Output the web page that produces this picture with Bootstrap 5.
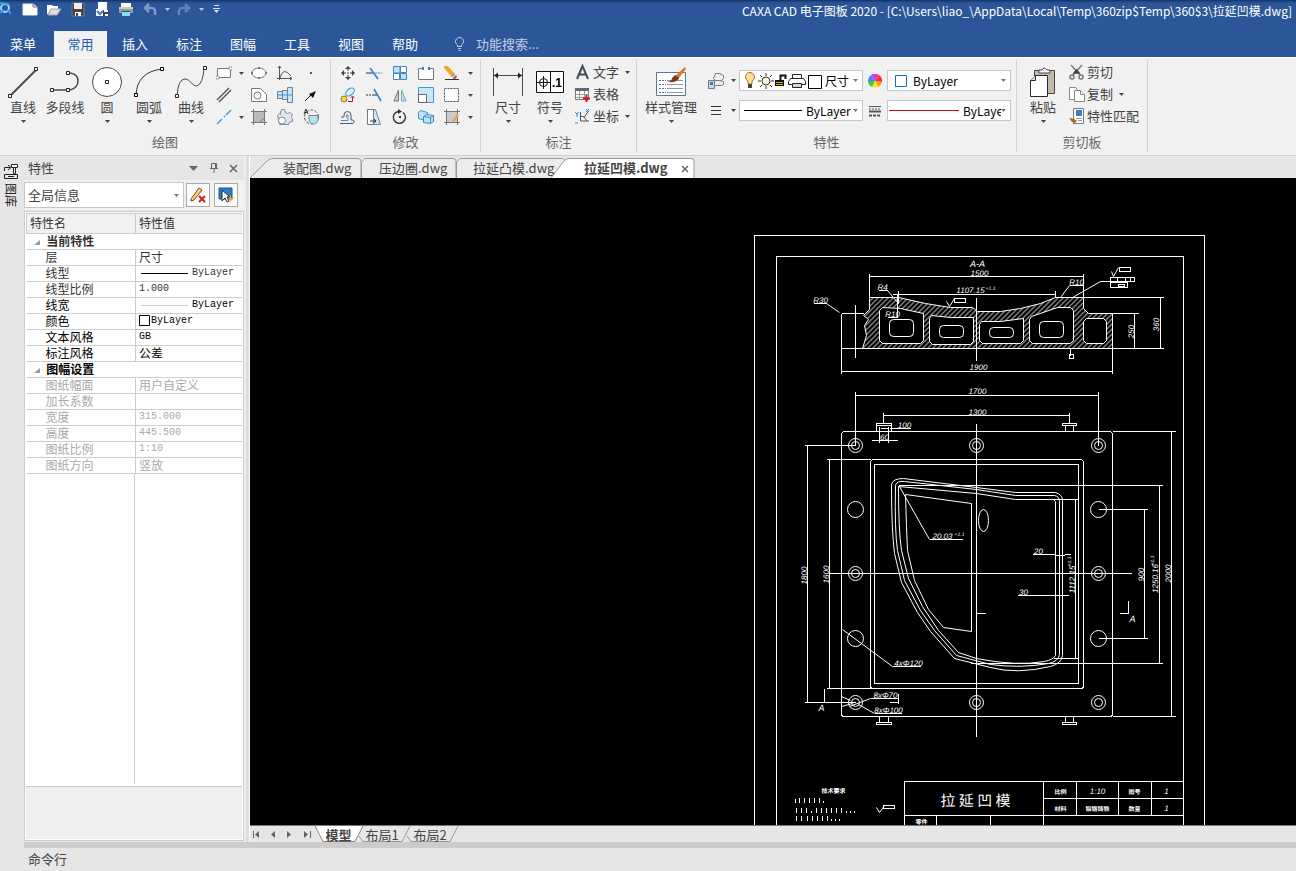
<!DOCTYPE html>
<html lang="zh-CN">
<head>
<meta charset="utf-8">
<meta name="viewport" content="width=device-width, initial-scale=1">
<title>CAXA CAD 电子图板 2020</title>
<link rel="stylesheet" href="https://cdn.jsdelivr.net/npm/bootstrap@5.3.0/dist/css/bootstrap.min.css">
<script src="https://cdn.jsdelivr.net/npm/bootstrap@5.3.0/dist/js/bootstrap.bundle.min.js"></script>
<style>
:root{--blue:#2b579a;--line:#d0d0d0}
body{font-family:"Noto Sans CJK SC",sans-serif;font-size:13px;line-height:18px;color:#444;background:#e6e6e6;overflow:hidden}
svg{display:block;flex:none}
button{background:none;border:0;padding:0;color:inherit;font:inherit}
.titlebar{background:var(--blue);color:#fff;height:31px;box-shadow:inset 0 3px 3px -2px #0d2a55}
.quick{height:18px}
.quick button{width:24px;display:flex;justify-content:center}
.quick .slim{width:10px}
.apptitle{font-size:12px;line-height:22px;white-space:nowrap}
.menubar{background:var(--blue);height:26px;color:#fff}
.menubar button{width:54px;height:26px;line-height:24px}
.menubar .first{width:46px;margin-right:8px}
.menubar .chosen{background:#f1f1f1;color:#1a5fb4;width:53px;margin-right:1px}
.menubar input{background:none;border:0;color:#d5deee;width:120px;padding:0;font-size:13px;line-height:18px}
.menubar input::placeholder{color:#c3cfe4;opacity:1}
.ribbon{background:#f1f1f1;height:99px;border-bottom:1px solid var(--line);box-shadow:inset 0 1px #fff}
.rgroup{position:relative;border-right:1px solid var(--line);margin:3px 0;flex:none}
.rbody{height:73px;padding-top:2px}
.rtitle{text-align:center;color:#666;line-height:18px}
.big{width:42px;display:flex;flex-direction:column;align-items:center;padding-top:2px;height:70px;white-space:nowrap}
.big .caret{margin-top:4px}
.mini{display:grid;grid-auto-rows:22px}
.mini button{display:flex;align-items:center;justify-content:center}
.tool{display:flex;align-items:center;gap:2px;height:22px;white-space:nowrap;line-height:20px;padding-bottom:2px}
.combo{display:flex;align-items:center;background:#fff;border:1px solid #c6c6c6;height:21px;width:124px;color:#000;padding-left:3px;overflow:hidden}
.combo select{appearance:none;border:0;background:none;padding:0;color:inherit;font-size:12px;line-height:18px;flex:1;min-width:0;overflow:hidden}
.combo .caret{margin:0 4px 0 0}
.side{width:24px;padding:7px 0 0 3px}
.side button{writing-mode:vertical-rl;text-orientation:sideways;font-size:12px;line-height:16px;display:flex;align-items:center;color:#222}
.side svg{writing-mode:horizontal-tb}
.panel{width:220px}
.panelhead{height:24px;padding-left:4px}
.picker{background:#f1f1f1;height:30px}
.picker .combo{width:160px;height:26px;color:#444;padding-left:3px}
.picker .combo select{font-size:13px}
.sq{width:24px;height:24px;border:1px solid #aaa;background:#fcfcfc;display:grid;place-items:center}
.sheet{border:1px solid #ccc;background:#fff;padding:1px;font-size:12px;margin:1px 0}
.props{width:100%;border-collapse:collapse;table-layout:fixed;line-height:14px;color:#333}
.props td,.props th{padding:0 0 1px 3px;font-weight:400;border-bottom:1px solid #ccc;height:16px;white-space:nowrap}
.props th{background:#f1f1f1;border:1px solid #ccc;height:20px}
.props th:last-child{border-right:0}
.props tbody th{border:0;border-bottom:1px solid #ccc;height:16px;background:#fff;font-weight:700;padding-left:7px}
.props tbody td:first-child{padding-left:19px;border-right:1px solid #ccc}
.props .dark,.props .dark th{color:#000}
.props .dim{color:#aaa}
.props .latin{font-family:"Liberation Mono",monospace;font-size:10px}
.props .sample{display:flex;align-items:center;height:14px}
.rest{background:linear-gradient(#ccc,#ccc) 108px 0/1px 100% no-repeat}
.note{background:#efefef;border-top:1px solid #ccc;height:53px;margin-top:2px}
.gutter{width:6px;border-left:2px solid #efefef;border-right:1px solid #fff;background:#ddd}
.doctabs{height:22px;padding-top:2px}
.doctabs button{position:relative;height:20px;line-height:20px;text-align:left;white-space:nowrap;z-index:1}
.doctabs svg.shape,.sheets svg.shape{position:absolute;left:0;top:0;z-index:-1;overflow:visible}
.doctabs .open{font-weight:700;z-index:2}
.board{background:#000;min-height:0}
.board text{fill:#fff;stroke:none;font:italic 8px "Liberation Sans Narrow","Liberation Sans",sans-serif;text-rendering:geometricPrecision}
.board .hz{font:6px "Noto Sans CJK SC",sans-serif;font-weight:700}
.board .name{font:15px "Noto Sans CJK SC",sans-serif}
.board .tol{font-size:5px}
.sheets{height:17px;border-top:1px solid #777}
.sheets button{position:relative;height:16px;line-height:13px;z-index:1;text-align:center}
.sheets .nav4{width:16px;display:flex;justify-content:center;align-items:center}
.cmd{height:29px;border-top:6px solid #ccc;margin-left:24px;padding:2px 4px}
</style>
</head>
<body class="d-flex flex-column vh-100">
<svg width="0" height="0" class="position-absolute" aria-hidden="true">
 <symbol id="dd" viewBox="0 0 5 3"><path d="M0 0h5L2.500 3z" fill="currentColor"/></symbol>
</svg>

<header>
 <div class="titlebar d-flex justify-content-between align-items-start">
  <div class="quick d-flex align-items-center">
   <button style="width:18px" aria-label="CAXA"><svg width="18" height="18" viewBox="0 0 18 18" fill="none"><circle cx="5" cy="8" r="4" stroke="#9cd1ff" stroke-width="2"/><path d="M0 3l9 1M8 10l3 4M0 13l4-3" stroke="#2fa0f5" stroke-width="2"/></svg></button>
   <button aria-label="新建"><svg width="16" height="16" viewBox="0 0 16 16"><path d="M1 3h10l4 3v8H1z" fill="#fff" stroke="#eee"/><path d="M11 3v3h4" fill="#ddd" stroke="#777"/></svg></button>
   <button aria-label="打开"><svg width="16" height="16" viewBox="0 0 16 16"><path d="M1 4h5l1 1h5v3H5l-3 5H1z" fill="#fff"/><path d="M5 8h10l-4 6H2z" fill="#ddd" stroke="#aaa"/></svg></button>
   <button aria-label="保存"><svg width="16" height="16" viewBox="0 0 16 16"><path d="M2 2h12v13H2z" fill="#444" stroke="#777"/><path d="M4 2h8v6H4z" fill="#eee"/><path d="M5 11h6v4H5z" fill="#fff"/><path d="M6 12h2v3H6z" fill="#444"/></svg></button>
   <button aria-label="另存为"><svg width="16" height="16" viewBox="0 0 16 16"><path d="M4 1h9v8H4z" fill="#fff"/><path d="M2 8h7v7H2z" fill="#fff"/><path d="M3 10l3 3 3-3" stroke="#3a7fd0" fill="none" stroke-width="2"/><path d="M9 9h6v6H9z" fill="#444"/><path d="M10 9h4v2h-4zM11 13h3v2h-3z" fill="#fff"/></svg></button>
   <button aria-label="打印"><svg width="16" height="16" viewBox="0 0 16 16"><path d="M3 2h10v4H3z" fill="#fff"/><path d="M1 6h14v6H1z" fill="#999"/><path d="M1 6h14v2H1z" fill="#ccc"/><path d="M4 10h8v5H4z" fill="#7fe0f5"/><path d="M4 10h8v1H4z" fill="#444"/></svg></button>
   <button aria-label="撤销"><svg width="16" height="16" viewBox="0 0 16 16" fill="none" stroke="#7e9bc8" stroke-width="2.500"><path d="M3 7h7q4 0 3 7"/><path d="M7 3L3 7l4 4"/></svg></button>
   <button class="slim" aria-label="撤销列表"><svg width="5" height="3" color="#b8c6df"><use href="#dd"/></svg></button>
   <button aria-label="重做"><svg width="16" height="16" viewBox="0 0 16 16" fill="none" stroke="#5f83bb" stroke-width="2.500"><path d="M13 7H6q-4 0-3 7"/><path d="M9 3l4 4-4 4"/></svg></button>
   <button class="slim" aria-label="重做列表"><svg width="5" height="3" color="#b8c6df"><use href="#dd"/></svg></button>
   <button style="width:20px" aria-label="自定义"><svg width="7" height="8" viewBox="0 0 7 8"><path d="M1 0h5v1H1zM0 3h7v1H0zM1 5h5L3.500 8z" fill="#dbe3f0"/></svg></button>
  </div>
  <div class="apptitle pe-1">CAXA CAD 电子图板 2020 - [C:\Users\liao_\AppData\Local\Temp\360zip$Temp\360$3\拉延凹模.dwg]</div>
 </div>
 <nav class="menubar d-flex align-items-center">
  <button class="first">菜单</button><button class="chosen">常用</button><button>插入</button><button>标注</button><button>图幅</button><button>工具</button><button>视图</button><button>帮助</button>
  <label class="d-flex align-items-center gap-2" style="margin-left:20px" aria-label="功能搜索">
   <svg width="16" height="14" viewBox="0 0 16 14" fill="none" stroke="#c3cfe4"><path d="M5.500 9.500V8a4 4 0 1 1 4 0V9.500zM6 11.500h3M6.500 13.500h2"/></svg>
   <input type="text" placeholder="功能搜索...">
  </label>
 </nav>
</header>

<section class="ribbon d-flex">
 <div class="rgroup" style="width:331px">
  <div class="rbody d-flex" style="padding-left:2px">
   <button class="big"><svg width="34" height="34" viewBox="0 0 34 34"><path d="M4 32L31 5" stroke="#444b57" stroke-width="2"/><path d="M2.500 30.500h3v3h-3zM28.500 3.500h3v3h-3z" fill="#fff" stroke="#222"/></svg>直线<svg class="caret" width="5" height="3"><use href="#dd"/></svg></button>
   <button class="big"><svg width="34" height="34" viewBox="0 0 34 34" fill="none"><path d="M4 26h16M19 9h3q8 1 8 8t-8 9" stroke="#444b57" stroke-width="1.500"/><path d="M2.500 24.500h3v3h-3zM18.500 24.500h3v3h-3zM18.500 7.500h3v3h-3z" fill="#fff" stroke="#222"/></svg>多段线</button>
   <button class="big"><svg width="34" height="34" viewBox="0 0 34 34"><circle cx="17" cy="18" r="14.500" fill="#fff" stroke="#444b57"/><path d="M15.500 16.500h3v3h-3z" fill="#fff" stroke="#222"/></svg>圆<svg class="caret" width="5" height="3"><use href="#dd"/></svg></button>
   <button class="big"><svg width="34" height="34" viewBox="0 0 34 34" fill="none"><path d="M4 31Q5 8 30 5" stroke="#333"/><path d="M2.500 29.500h3v3h-3zM28.500 3.500h3v3h-3z" fill="#fff" stroke="#000"/></svg>圆弧<svg class="caret" width="5" height="3"><use href="#dd"/></svg></button>
   <button class="big"><svg width="34" height="34" viewBox="0 0 34 34" fill="none"><path d="M3 32Q4 15 11 15c5 0 7 7 12 7Q29 20 30 4" stroke="#444b57"/><path d="M1.500 30.500h3v3h-3zM29.500 2.500h3v3h-3z" fill="#fff" stroke="#222"/></svg>曲线<svg class="caret" width="5" height="3"><use href="#dd"/></svg></button>
   <div class="mini" style="grid-template-columns:24px 10px 26px 26px 26px">
    <button aria-label="矩形"><svg width="16" height="16" viewBox="0 0 16 16"><path d="M1.500 3.500h13v9h-13z" fill="#fff" stroke="#777"/><path d="M0 11h3v3H0zM13 2h3v3h-3z" fill="#fff" stroke="#777" stroke-width=".6"/></svg></button>
    <button aria-label="矩形选项"><svg width="5" height="3"><use href="#dd"/></svg></button>
    <button aria-label="椭圆"><svg width="16" height="16" viewBox="0 0 16 16"><ellipse cx="8" cy="8" rx="7" ry="5" fill="#fff" stroke="#777"/><path d="M0 7h2v2H0zM14 7h2v2h-2zM7 2h2v2H7zM7 12h2v2H7z" fill="#777"/></svg></button>
    <button aria-label="公式曲线"><svg width="16" height="16" viewBox="0 0 16 16" fill="none" stroke="#555"><path d="M2.500 1v14M0 13.500h15M3 13Q6 1 14 11M1 3l1.500-2L4 3M13 12l2 1.500-2 1.500"/></svg></button>
    <button aria-label="点"><svg width="16" height="16" viewBox="0 0 16 16"><path d="M7 7h2v2H7z" fill="#555"/></svg></button>
    <button aria-label="平行线"><svg width="16" height="16" viewBox="0 0 16 16" stroke="#444b57" stroke-width="1.300"><path d="M1 13L13 1M3 15L15 3"/></svg></button><span></span>
    <button aria-label="孔"><svg width="16" height="16" viewBox="0 0 16 16" fill="#fff" stroke="#777"><path d="M.5 1.500h9l6 6v7H.5z"/><circle cx="6.500" cy="8.500" r="3.500"/></svg></button>
    <button aria-label="轴"><svg width="16" height="16" viewBox="0 0 16 16" fill="#c9e6f7" stroke="#6c8299"><path d="M.5 4.500h5v7h-5zM5.500 3.500h5v9h-5zM10.500.5h5v15h-5z"/><path d="M0 8h16" stroke="#3a8fd8"/></svg></button>
    <button aria-label="箭头"><svg width="16" height="16" viewBox="0 0 16 16"><path d="M2 14l6-6" stroke="#111"/><path d="M13 4L6 7l4 4z" fill="#111"/></svg></button>
    <button aria-label="中心线"><svg width="16" height="16" viewBox="0 0 16 16" stroke="#1da1e0" stroke-width="1.300"><path d="M1 15l5-5M8 8l1-1M10 6l5-5"/></svg></button>
    <button aria-label="中心线选项"><svg width="5" height="3"><use href="#dd"/></svg></button>
    <button aria-label="填充"><svg width="16" height="16" viewBox="0 0 16 16"><path d="M2 2h12v12H2z" fill="#bbb"/><path d="M0 2.500h16M0 13.500h16M2.500 0v16M13.500 0v16M8 14l6-6" stroke="#777"/></svg></button>
    <button aria-label="齿轮"><svg width="16" height="16" viewBox="0 0 16 16" fill="#dfe4eb" stroke="#7d8ca0"><path d="M.5 6.500l2-2 1 1V3l1-2.500h3l1 3 2 1 2-1 3 2-1 3 1 1v3l-3 .5-1 2.500h-9z"/><circle cx="5" cy="11.500" r="3.500" fill="#fff"/></svg></button>
    <button aria-label="局部放大"><svg width="16" height="16" viewBox="0 0 16 16" fill="none" stroke="#555"><circle cx="8.500" cy="8" r="7" stroke-dasharray="3 1.500"/><path d="M6 6.500h9v4a4.500 4.500 0 0 1-9 0z" fill="#b5e2f8" stroke="#789"/><path d="M1 5l2-5 2 5M2 3.500h2" stroke="#333"/></svg></button>
   </div>
  </div>
  <div class="rtitle">绘图</div>
 </div>

 <div class="rgroup" style="width:150px">
  <div class="rbody ps-1">
   <div class="mini" style="grid-template-columns:26px 26px 26px 26px 26px 10px">
    <button aria-label="平移"><svg width="16" height="16" viewBox="0 0 16 16" fill="#444"><path d="M8 1l3 3H5zM8 15l3-3H5zM1 8l3-3v6zM15 8l-3-3v6z"/><path d="M7 7h2v2H7zM7 4h2v2H7zM7 10h2v2H7zM4 7h2v2H4zM10 7h2v2h-2z" fill="#999"/></svg></button>
    <button aria-label="裁剪"><svg width="16" height="16" viewBox="0 0 16 16" fill="none"><path d="M0 8h7" stroke="#333"/><path d="M9 8h7" stroke="#3a8fd8" stroke-dasharray="2 1"/><path d="M4 3l8 11" stroke="#2f7ecb" stroke-width="1.500"/></svg></button>
    <button aria-label="阵列"><svg width="16" height="16" viewBox="0 0 16 16" stroke="#4286bd"><path d="M1.500 1.500h6.500v6.500h-6.500zM8.500 8.500h6v6h-6z" fill="#bce4f9"/><path d="M8.500 1.500h6v6h-6zM1.500 8.500h6v6h-6z" fill="#fff"/></svg></button>
    <button aria-label="打断"><svg width="16" height="16" viewBox="0 0 16 16" fill="#fff" stroke="#777"><path d="M5 3.500H.5v11h15v-11H11"/><path d="M4 2h2v3H4zM10 2h2v3h-2z" fill="#2f7ecb" stroke="none"/></svg></button>
    <button aria-label="删除"><svg width="16" height="16" viewBox="0 0 16 16"><path d="M0 3V1h4l7 8-3 3z" fill="#f5a623"/><path d="M7 11l3-3 1 2-3 2z" fill="#999"/><path d="M9 13l3-3 1 2-3 3z" fill="#b04a30"/><path d="M1 14.500h14" stroke="#333"/></svg></button>
    <button aria-label="删除选项"><svg width="5" height="3"><use href="#dd"/></svg></button>
    <button aria-label="复制图形"><svg width="16" height="16" viewBox="0 0 16 16"><ellipse cx="10" cy="5" rx="5" ry="3" transform="rotate(-40 10 5)" fill="#d9effb" stroke="#3b88c3"/><circle cx="4" cy="12" r="3" fill="#ffe100" stroke="#777"/><path d="M8 14.500h4.500V10M10.500 11l2-2 2 2" stroke="#a22" fill="none"/></svg></button>
    <button aria-label="延伸"><svg width="16" height="16" viewBox="0 0 16 16" fill="none"><path d="M0 8h6" stroke="#333" stroke-dasharray="2 1"/><path d="M6 8h5" stroke="#333"/><path d="M8 2l7 12" stroke="#2f7ecb" stroke-width="1.500"/></svg></button>
    <button aria-label="镜像"><svg width="16" height="16" viewBox="0 0 16 16"><path d="M6.500 3v11H2z" fill="#ccc" stroke="#777"/><path d="M9.500 3v11H14z" fill="#bce4f9" stroke="#6aa"/></svg></button>
    <button aria-label="缩放"><svg width="16" height="16" viewBox="0 0 16 16"><path d="M.5.5h15v15H.5z" fill="#c5e9fb" stroke="#4b95c4"/><path d="M.5 7.500h8v8h-8z" fill="#fff" stroke="#666"/></svg></button>
    <button aria-label="分解"><svg width="16" height="16" viewBox="0 0 16 16"><path d="M.5 1.500h14v13H.5z" fill="#fff" stroke="#555" stroke-dasharray="2 1"/></svg></button>
    <button aria-label="分解选项"><svg width="5" height="3"><use href="#dd"/></svg></button>
    <button aria-label="等距"><svg width="16" height="16" viewBox="0 0 16 16" fill="none" stroke="#556"><path d="M0 14.500h13q3-1.500 0-3.500h-2V6a3.500 3.500 0 0 0-7 0v2H1"/><path d="M1 11.500h7V6a1 1 0 0 0-1.500 0v2.500" stroke="#478fc4"/></svg></button>
    <button aria-label="拉伸"><svg width="16" height="16" viewBox="0 0 16 16"><path d="M1.500.5h8l5 15h-13z" fill="#c5e9fb" stroke="#789"/><path d="M1.500.5h6v15h-6z" fill="#fff" stroke="#777"/><path d="M4 12h6M8 10l2 2-2 2" stroke="#333" fill="none"/></svg></button>
    <button aria-label="旋转"><svg width="16" height="16" viewBox="0 0 16 16" fill="none"><path d="M6 2.500a6 6 0 1 0 5 1" stroke="#333" stroke-width="1.400"/><path d="M6 0l4 2.500-4 2.500zM7 7h2v2H7z" fill="#333"/></svg></button>
    <button aria-label="三维"><svg width="16" height="16" viewBox="0 0 16 16" fill="#bce4f9" stroke="#3f8bbf"><path d="M.5 3.500l2-2 7 2v6l-2 2-7-2z"/><path d="M5.500 7.500l3-2 7 1v6l-3 2-7-1z"/><path d="M5.500 7.500l7 1v6M12.500 8.500l3-2"/></svg></button>
    <button aria-label="编辑填充"><svg width="16" height="16" viewBox="0 0 16 16"><path d="M2 2h12v12H2z" fill="#ccc"/><path d="M0 2.500h16M0 13.500h16M2.500 0v16M13.500 0v16" stroke="#777"/><path d="M8 12l5-7 2 1-5 7z" fill="#e8a33a"/></svg></button>
    <button aria-label="填充选项"><svg width="5" height="3"><use href="#dd"/></svg></button>
   </div>
  </div>
  <div class="rtitle">修改</div>
 </div>

 <div class="rgroup" style="width:156px">
  <div class="rbody d-flex" style="padding-left:6px">
   <button class="big"><svg width="34" height="34" viewBox="0 0 34 34"><path d="M2.500 4v28M31.500 4v28M3 11.500h28" stroke="#444b57"/><path d="M3 11.500l4-3v6zM31 11.500l-4-3v6z" fill="#222"/></svg>尺寸<svg class="caret" width="5" height="3"><use href="#dd"/></svg></button>
   <button class="big"><svg width="34" height="34" viewBox="0 0 34 34"><path d="M3.500 7.500h27v21h-27zM17.500 7v21" fill="#fff" stroke="#111"/><circle cx="10.500" cy="18.500" r="4" fill="none" stroke="#111"/><path d="M4 18.500h13M10.500 12v13" stroke="#111"/><text x="19" y="23" font-family="Liberation Sans" font-weight="700" font-size="12">.1</text></svg>符号<svg class="caret" width="5" height="3"><use href="#dd"/></svg></button>
   <div class="ps-1">
    <button class="tool"><svg width="16" height="16" viewBox="0 0 16 16"><path d="M2 15L7.500 2 13 15M4 10.500h7" stroke="#444b57" stroke-width="2" fill="none"/></svg>文字<svg class="ms-1" width="5" height="3"><use href="#dd"/></svg></button>
    <button class="tool"><svg width="16" height="16" viewBox="0 0 16 16"><path d="M.5 2.500h13v11H.5z" fill="#fff" stroke="#777"/><path d="M0 2h14v3H0z" fill="#667"/><path d="M4.500 5v8M9.500 5v8M1 8.500h13M1 11.500h13" stroke="#999"/><path d="M8 12.500h7M11.500 9v7" stroke="#d01020" stroke-width="2"/></svg>表格</button>
    <button class="tool"><svg width="16" height="16" viewBox="0 0 16 16" fill="none"><path d="M5.500 4v9H14M5.500 8l4 1 4-6M9 9l3 4" stroke="#555"/><path d="M0 4l2 2 2-2M2 6v3M11 1l3 3M14 1l-3 3M0 15h3" stroke="#2d86d6"/></svg>坐标<svg class="ms-1" width="5" height="3"><use href="#dd"/></svg></button>
   </div>
  </div>
  <div class="rtitle">标注</div>
 </div>

 <div class="rgroup" style="width:380px">
  <div class="rbody d-flex">
   <button class="big" style="width:68px"><svg width="34" height="34" viewBox="0 0 34 34"><path d="M2.500 8.500h29v23h-29z" fill="#fff" stroke="#5a7894"/><path d="M5 16.500h7M5 20.500h7M5 24.500h7M5 28.500h7" stroke="#678" stroke-dasharray="2 1"/><path d="M13 16.500h16M13 20.500h16M13 24.500h16M13 28.500h16" stroke="#89a"/><path d="M31 3l-10 9 3 3 8-10z" fill="#d77a28"/><path d="M21 11l4 3q-1 5-12 4 5-1 5-4z" fill="#7b3c1c"/></svg>样式管理<svg class="caret" width="5" height="3"><use href="#dd"/></svg></button>
   <div class="d-flex flex-column pt-2" style="gap:9px">
    <div class="d-flex align-items-center">
     <button class="d-flex justify-content-center" style="width:22px" aria-label="图层"><svg width="16" height="16" viewBox="0 0 16 16" fill="#eee" stroke="#778"><path d="M5.500 5.500l2-5h4l4 2v3l-2 2h-6z"/><path d="M5.500 10.500l2-3h4l4 1v3l-2 1h-6z"/><path d="M.5 7.500h6v8h-6z" fill="#c9d8e6"/><path d="M2 9h3v3H2z" fill="#3d7ab0" stroke="none"/></svg></button>
     <button class="d-flex justify-content-center" style="width:12px" aria-label="图层选项"><svg width="5" height="3"><use href="#dd"/></svg></button>
     <div class="combo">
      <svg width="82" height="18" viewBox="0 0 82 18"><path d="M5 12V9a4.500 4.500 0 1 1 4 0v3z" fill="#ffe089" stroke="#8b7448"/><path d="M5 12h4v4H5z" fill="#444"/><g stroke="#333"><circle cx="23" cy="9" r="4" fill="#fff6df"/><path d="M23 1v3M23 14v3M15 9h3M28 9h3M17 3l2 2M27 13l2 2M17 15l2-2M27 5l2-2"/></g><path d="M32 8h9v6h-9z" fill="#111"/><path d="M33 10.500h7M33 12.500h7" stroke="#c8b800"/><path d="M37.500 8V3.500h5V7" stroke="#111" stroke-width="2" fill="none"/><g fill="#fff" stroke="#222"><path d="M49.500 2.500h9v4h-9zM47.500 6.500h13l2 3v3h-17v-3z"/><path d="M49.500 11.500h9v4h-9z" fill="#cfd9e4"/><path d="M65.500 3.500h13v13h-13z" stroke="#000"/></g></svg>
      <select aria-label="图层"><option>尺寸</option></select><svg class="caret" width="5" height="3" color="#777"><use href="#dd"/></svg></div>
     <button class="d-flex justify-content-center" style="width:24px" aria-label="颜色"><svg width="14" height="14" viewBox="-7 -7 14 14"><path d="M0 0L-4-6A7 7 0 0 1 4-6z" fill="#d53ce0"/><path d="M0 0L4-6A7 7 0 0 1 7 1z" fill="#ff3030"/><path d="M0 0L7 1A7 7 0 0 1 3 6z" fill="#ff9a1f"/><path d="M0 0L3 6A7 7 0 0 1-3 6z" fill="#ffe21f"/><path d="M0 0L-3 6A7 7 0 0 1-7 0z" fill="#37cc3b"/><path d="M0 0L-7 0A7 7 0 0 1-4-6z" fill="#477dff"/></svg></button>
     <div class="combo"><svg class="ms-1 me-1" width="14" height="12" viewBox="0 0 14 12"><path d="M.5.5h11v11H.5z" fill="#fff" stroke="#0a70d0"/></svg>
      <select aria-label="颜色"><option>ByLayer</option></select><svg class="caret" width="5" height="3" color="#777"><use href="#dd"/></svg></div>
    </div>
    <div class="d-flex align-items-center">
     <button class="d-flex justify-content-center" style="width:22px" aria-label="线型"><svg width="10" height="9" viewBox="0 0 10 9"><path d="M0 .5h10M0 4.500h10M0 8.500h10" stroke="#333" shape-rendering="crispEdges"/></svg></button>
     <button class="d-flex justify-content-center" style="width:12px" aria-label="线型选项"><svg width="5" height="3"><use href="#dd"/></svg></button>
     <div class="combo"><svg class="me-1" width="59" height="1"><path d="M1 0h58v1H1z"/></svg>
      <select aria-label="线型"><option>ByLayer</option></select><svg class="caret" width="5" height="3" color="#777"><use href="#dd"/></svg></div>
     <button class="d-flex justify-content-center" style="width:24px" aria-label="线宽"><svg width="12" height="12" viewBox="0 0 12 12" stroke="#555"><path d="M0 1.500h12"/><path d="M0 4h12" stroke-dasharray="2 1"/><path d="M0 6.500h12" stroke-width="2"/><path d="M0 10.500h12" stroke-width="2" stroke-dasharray="3 1"/></svg></button>
     <div class="combo" style="padding-left:1px"><svg class="me-1" width="70" height="1"><path d="M0 0h70v1H0z" fill="#e00000"/></svg>
      <select aria-label="线宽"><option>ByLayer</option></select><svg class="caret" width="5" height="3" color="#777"><use href="#dd"/></svg></div>
    </div>
   </div>
  </div>
  <div class="rtitle">特性</div>
 </div>

 <div class="rgroup" style="width:131px">
  <div class="rbody d-flex">
   <button class="big" style="width:52px"><svg width="34" height="34" viewBox="0 0 34 34"><path d="M8.500 6.500h20v23h-20z" fill="#c4baa9" stroke="#444"/><path d="M13 9V6h3q2-4 5 0h3v3z" fill="#fff" stroke="#444"/><path d="M9.500 11.500h12v21h-17v-16z" fill="#fff" stroke="#222b3a"/><path d="M9.500 11.500v5h-5" fill="#ddd" stroke="#222b3a"/></svg>粘贴<svg class="caret" width="5" height="3"><use href="#dd"/></svg></button>
   <div>
    <button class="tool"><svg width="16" height="16" viewBox="0 0 16 16" fill="none" stroke="#777" stroke-width="1.500"><path d="M2 1l9 10M13 1L4 11"/><circle cx="3" cy="13" r="2"/><circle cx="12" cy="13" r="2"/><path d="M5 9l2.500-3L10 9z" fill="#444" stroke="#444"/></svg>剪切</button>
    <button class="tool"><svg width="16" height="16" viewBox="0 0 16 16" fill="#fff" stroke="#888"><path d="M.5 1.500h6l3 3v9h-9z"/><path d="M5.500 4.500h6l4 4v7h-10z"/><path d="M11.500 4.500v4h4"/></svg>复制<svg class="ms-1" width="5" height="3"><use href="#dd"/></svg></button>
    <button class="tool"><svg width="16" height="16" viewBox="0 0 16 16"><path d="M4.500.5h10v15h-10z" fill="#fff" stroke="#778"/><path d="M7 2h6v6H7z" fill="#3e7dbb"/><path d="M7 10.500h6M9 12.500h4" stroke="#89a"/><path d="M0 10l5 1 3 2-2 2-3-1z" fill="#b4641e"/></svg>特性匹配</button>
   </div>
  </div>
  <div class="rtitle">剪切板</div>
 </div>
</section>

<main class="d-flex flex-fill" style="min-height:0">
 <div class="side"><button><svg width="16" height="16" viewBox="0 0 16 16" fill="none" stroke="#222" class="mb-1"><path d="M1.500 8V4.500H7M5 2l3 2.500L5 7"/><path d="M8.500 1.500h6v3h-6zM10.500 4.500v6h2v-6" fill="#ffe"/><path d="M1.500 11.500h13v4h-13zM5 13.500h6"/></svg>图库</button></div>
 <aside class="panel d-flex flex-column">
  <div class="panelhead d-flex align-items-center"><span class="me-auto">特性</span>
   <button class="me-2" aria-label="菜单"><svg width="12" height="12" viewBox="0 0 12 12"><path d="M1 4h9L5.500 9z" fill="#666"/></svg></button>
   <button class="me-2" aria-label="固定"><svg width="12" height="12" viewBox="0 0 12 12" fill="none" stroke="#666"><path d="M3.500 1.500h5v5h-5zM2 6.500h8M6 7v4M7.500 1v5"/></svg></button>
   <button class="me-1" aria-label="关闭"><svg width="12" height="12" viewBox="0 0 12 12" stroke="#666" stroke-width="1.500"><path d="M2 3l7 7M9 3l-7 7"/></svg></button></div>
  <div class="picker d-flex align-items-center"><div class="combo"><select aria-label="范围"><option>全局信息</option></select><svg class="caret" width="5" height="3" color="#777"><use href="#dd"/></svg></div>
   <button class="sq" style="margin-left:2px" aria-label="清除"><svg width="16" height="16" viewBox="0 0 16 16"><path d="M1 12L9 1l3 2-8 10-3 1z" fill="#ffd35c" stroke="#743"/><path d="M9 9l6 6M15 9l-6 6" stroke="#c22" stroke-width="2"/></svg></button>
   <button class="sq ms-1" aria-label="快速选择"><svg width="16" height="16" viewBox="0 0 16 16"><path d="M1 1h13v11H1z" fill="#2f7fc4" stroke="#15588f"/><path d="M4 3v11l3-3 2 4 2-1-2-4h3z" fill="#fff" stroke="#222"/><path d="M13 8l-3 4h3l-2 4 5-5h-3z" fill="#f6a01a"/></svg></button></div>
  <div class="sheet d-flex flex-column flex-fill">
   <table class="props">
    <colgroup><col style="width:109px"><col></colgroup>
    <thead><tr><th scope="col">特性名</th><th scope="col">特性值</th></tr></thead>
    <tbody>
     <tr><th colspan="2"><svg class="d-inline-block me-1" width="6" height="5"><path d="M6 0v5H0z" fill="#999"/></svg> 当前特性</th></tr>
     <tr><td>层</td><td>尺寸</td></tr>
     <tr><td>线型</td><td><div class="sample"><svg class="me-1" width="49" height="1"><path d="M2 0h47v1H2z" fill="#000"/></svg><span class="latin">ByLayer</span></div></td></tr>
     <tr><td>线型比例</td><td class="latin">1.000</td></tr>
     <tr class="dark"><td>线宽</td><td><div class="sample"><svg class="me-1" width="49" height="1"><path d="M2 0h47v1H2z" fill="#ccc"/></svg><span class="latin">ByLayer</span></div></td></tr>
     <tr class="dark"><td>颜色</td><td><div class="sample"><svg width="12" height="12"><path d="M.5.5h10v10H.5z" fill="#fff" stroke="#000"/></svg><span class="latin">ByLayer</span></div></td></tr>
     <tr class="dark"><td>文本风格</td><td class="latin">GB</td></tr>
     <tr class="dark"><td>标注风格</td><td>公差</td></tr>
     <tr class="dark"><th colspan="2"><svg class="d-inline-block me-1" width="6" height="5"><path d="M6 0v5H0z" fill="#999"/></svg> 图幅设置</th></tr>
     <tr class="dim"><td>图纸幅面</td><td>用户自定义</td></tr>
     <tr class="dim"><td>加长系数</td><td></td></tr>
     <tr class="dim"><td>宽度</td><td class="latin">315.000</td></tr>
     <tr class="dim"><td>高度</td><td class="latin">445.500</td></tr>
     <tr class="dim"><td>图纸比例</td><td class="latin">1:10</td></tr>
     <tr class="dim"><td>图纸方向</td><td>竖放</td></tr>
    </tbody>
   </table>
   <div class="rest flex-fill"></div>
   <div class="note"></div>
  </div>
 </aside>
 <div class="gutter"></div>

 <section class="d-flex flex-column flex-fill" style="min-width:0">
  <div class="doctabs d-flex">
   <button style="width:111px;padding-left:33px"><svg class="shape" width="112" height="20"><path d="M0 20L17 3q3-2.500 6-2.500h85q3 0 3 3V20" fill="#ececec" stroke="#999"/></svg>装配图.dwg</button>
   <button style="width:95px;padding-left:18px"><svg class="shape" width="96" height="20"><path d="M.5 20V4L4 .5h88q3 0 3 3V20" fill="#ececec" stroke="#999"/></svg>压边圈.dwg</button>
   <button style="width:95px;padding-left:17px"><svg class="shape" width="110" height="20"><path d="M.5 20V4L4 .5h103l3 3V20" fill="#ececec" stroke="#999"/></svg>拉延凸模.dwg</button>
   <button class="open d-flex align-items-center" style="width:143px;padding-left:33px"><svg class="shape" width="144" height="20"><path d="M0 20L13 3q2-2.500 5-2.500h122q3 0 3 3V20" fill="#fff" stroke="#999"/></svg>拉延凹模.dwg<svg class="ms-auto me-1" width="9" height="9" viewBox="0 0 9 9" stroke="#666" stroke-width="1.500"><path d="M1 2l6 6M7 2L1 8"/></svg></button>
  </div>
  <div class="board flex-fill overflow-hidden">
   <svg width="100%" height="100%" fill="none" stroke="#fff" role="img" aria-label="拉延凹模图纸">
    <defs><pattern id="hatch" width="5" height="5" patternUnits="userSpaceOnUse"><path d="M-1 1L1-1M0 5L5 0M4 6L6 4" stroke="#fff" stroke-width="1"/></pattern></defs>
    <g transform="translate(-249.500 -177.500)">
     <g shape-rendering="crispEdges">
      <path d="M754 900V235H1204V900M776 900V256H1183V900"/>
      <path d="M904 900V781H1183M904 815H1183M1043 798H1183M1043 781V900M1076 781V815M1118 781V815M1151 781V815M936 815V900M990 815V900"/>
      <path d="M869 276H1083M869 273V297M1083 273V297M892 294H1055M898 290V303M1055 290V297M841 371H1112M841 348V373M1112 348V373M855 395H1098M855 391V445M1098 391V445M883 415H1069M883 412V423M1069 412V423"/>
      <path d="M855 304V357M976 297V360M1083 297H1163M1112 313H1138M1112 348H1163M1134 313V348M1160 297V348M976 423V736M828 573H1131"/>
      <path d="M841 313H863M841 313V348H1112M1112 313V348"/>
      <path d="M889 428H910M871 440H897M879 426V442M888 426V442M876 423H891V425H876zM876 425V431M891 425V431M880 428H888M1062 423H1076V425H1062zM1065 425V431M1073 425V431M879 716V722M888 716V722M876 722H891V724H876zM1065 716V722M1073 716V722M1062 722H1076V724H1062z"/>
      <path d="M1112 431H1175M1112 716H1175M1171 431V716M804 445H855M804 702H855M807 445V702M826 459H870M826 688H870M829 459V688M898 485H1162M970 663H1162M1159 485V663M1015 499H1078M1053 658H1078M1075 499V658M1098 509H1147M1098 638H1147M1144 509V638M976 613H985M1032 554H1055M1055 555H1064M1064 554H1070M1017 595H1068M1119 613H1128V600M824 688V702"/>
      <rect x="841" y="431" width="271" height="285" rx="3"/><rect x="870" y="459" width="213" height="229" rx="3"/><rect x="874" y="464" width="204" height="219"/>
      <path d="M813 303H826M878 290H887M887 317H897V294M1083 285H1069M929 539H962M892 666H920M870 698H898M898 693V703M889 702H898M874 713H901"/>
      <path d="M1119 267H1130V271H1119zM1110 277H1134V281H1110zM1117 277V281M1125 277V281M1130 277V281M1110 282H1127V287H1110zM1118 284H1124V286H1118zM954 298H965V302H954zM1070 348V355M1069 354H1073V358H1069zM883 805H894V808H883z"/>
      <path d="M795 798V802M799 797V802M804 797V802M809 797V802M814 797V802M819 797V802M823 800V802M796 807V812M801 807V812M806 807V812M811 810V812M816 807V812M821 807V812M826 807V812M831 807V812M836 807V812M841 807V812M846 810V812M850 810V812M854 810V812M796 815V820M801 815V820M807 815V820M812 815V820M817 815V820M822 815V820M827 815V820M831 818V820M835 818V820M839 818V820"/>
     </g>
     <path fill="url(#hatch)" fill-rule="evenodd" d="M869 297H898L925 303 950 307H972L977 311H1000L1020 308 1040 303 1055 297H1083V308L1088 313H1112V348H862L866 335 864 325 868 319 863 315 869 309zM882 307L879 310V340L882 343H920L923 340V313L900 308zM931 315L929 318V341L932 344H970L973 341V317L950 317zM981 321L979 324V340L982 343H1020L1023 340V318L1000 321zM1031 316L1029 319V340L1032 343H1070L1073 340V310L1070 307H1057zM1086 318L1083 321V340L1086 343H1103L1106 340V321L1103 318z"/>
     <rect x="889" y="319" width="24" height="17" rx="4"/><rect x="939" y="325" width="24" height="12" rx="4"/><rect x="989" y="327" width="24" height="10" rx="4"/><rect x="1039" y="321" width="24" height="16" rx="4"/>
     <path d="M826 303L839 312M887 290L898 303M1069 285L1060 297M1072 297L1100 281H1110M1111 271L1113 276L1118 267M946 301L949 306L954 298M876 807L879 812L884 805M899 486L929 539M842 629L892 666M841 696L850 700M870 698L849 706M874 713L858 704M841 706L852 703"/>
     <g><circle cx="855" cy="445" r="7"/><circle cx="855" cy="445" r="4"/><circle cx="976" cy="445" r="7"/><circle cx="976" cy="445" r="4"/><circle cx="1098" cy="445" r="7"/><circle cx="1098" cy="445" r="4"/><circle cx="855" cy="573" r="7"/><circle cx="855" cy="573" r="4"/><circle cx="1098" cy="573" r="7"/><circle cx="1098" cy="573" r="4"/><circle cx="855" cy="702" r="7"/><circle cx="855" cy="702" r="4"/><circle cx="976" cy="702" r="7"/><circle cx="976" cy="702" r="4"/><circle cx="1098" cy="702" r="7"/><circle cx="1098" cy="702" r="4"/><circle cx="855" cy="509" r="8"/><circle cx="855" cy="638" r="8"/><circle cx="1098" cy="509" r="8"/><circle cx="1098" cy="638" r="8"/></g>
     <path d="M891 484Q892 478 903 478L976 487 1015 492H1055Q1062 494 1062 500V655Q1061 663 1050 666 1016 674 990 667L954 658 930 631 917 612 901 582 894 553Q891 530 891 484z"/>
     <path d="M895 485Q896 480 904 481L976 489 1015 495H1054Q1059 496 1059 501V654Q1058 661 1048 663 1020 668 990 664L956 655 934 630 920 610 904 580 897 550Q894 530 895 485z"/>
     <path d="M898 486L976 493 1015 499H1053L1055 501V655Q1053 659 1044 661 1016 666 976 658L958 652 938 630 922 606 908 578 901 550Q898 530 898 486z"/>
     <path d="M905 494L971 503V631L943 627 928 609 914 580 907 550Q906 530 905 494z"/>
     <ellipse cx="983" cy="520" rx="5" ry="11"/>
     <g text-anchor="middle">
      <text x="977" y="266" style="font-size:9px">A-A</text><text x="979" y="275">1500</text><text x="970" y="292">1107.15</text><text class="tol" x="990" y="289">+1.1</text>
      <text x="820" y="302">R30</text><text x="882" y="289">R4</text><text x="892" y="316">R10</text><text x="1076" y="284">R10</text>
      <text x="978" y="369">1900</text><text x="977" y="393">1700</text><text x="977" y="414">1300</text><text x="904" y="427">100</text><text x="884" y="439">60</text>
      <text x="942" y="538">20.03</text><text class="tol" x="959" y="535">+1.1</text><text x="1038" y="553">20</text><text x="1023" y="594">30</text>
      <text x="908" y="665">4xΦ120</text><text x="885" y="697">8xΦ70</text><text x="888" y="712">8xΦ100</text><text x="1132" y="621" style="font-size:9px">A</text><text x="821" y="710" style="font-size:9px">A</text>
      <text transform="translate(1133 331) rotate(-90)">250</text><text transform="translate(1158 324) rotate(-90)">360</text>
      <text transform="translate(806 575) rotate(-90)">1800</text><text transform="translate(828 574) rotate(-90)">1600</text>
      <text transform="translate(1074 579) rotate(-90)">1112.15</text><text class="tol" transform="translate(1070 561) rotate(-90)">+1.1</text><text transform="translate(1143 574) rotate(-90)">900</text>
      <text transform="translate(1157 578) rotate(-90)">1250.16</text><text class="tol" transform="translate(1153 560) rotate(-90)">+1.1</text><text transform="translate(1170 573) rotate(-90)">2000</text>
      <text class="name" x="975" y="805">拉 延 凹 模</text><text class="hz" x="833" y="792">技术要求</text><text class="hz" x="1060" y="793">比例</text><text x="1097" y="793">1:10</text><text class="hz" x="1134" y="793">图号</text><text x="1166" y="793">1</text>
      <text class="hz" x="1060" y="810">材料</text><text class="hz" x="1097" y="810">钼铬铸铁</text><text class="hz" x="1134" y="810">数量</text><text x="1166" y="810">1</text><text class="hz" x="921" y="823">零件</text>
     </g>
    </g>
   </svg>
  </div>
  <div class="sheets d-flex">
   <button class="nav4 ms-0" style="width:13px" aria-label="首页"><svg width="7" height="7" viewBox="0 0 7 7"><path d="M0 0h1v7H0zM6 0v7L2 3.500z" fill="#666"/></svg></button>
   <button class="nav4 ms-1" style="width:12px" aria-label="上一页"><svg width="5" height="7"><path d="M4 0v7L0 3.500z" fill="#666"/></svg></button>
   <button class="nav4 ms-1" style="width:12px" aria-label="下一页"><svg width="5" height="7"><path d="M0 0v7l4-3.500z" fill="#666"/></svg></button>
   <button class="nav4 ms-1" aria-label="末页"><svg width="7" height="7"><path d="M6 0h1v7H6zM0 0v7l4-3.500z" fill="#666"/></svg></button>
   <button class="fw-bold" style="width:47px;z-index:3"><svg class="shape" width="48" height="16"><path d="M0 0L8 15.500H40L48 0z" fill="#fff"/><path d="M0 0L8 15.500H40L48 0" fill="none" stroke="#888"/></svg>模型</button>
   <button class="pe-2" style="width:48px;z-index:2"><svg class="shape" width="48" height="16"><path d="M-3 10L1 15.500H40L48 0" fill="none" stroke="#999"/></svg>布局1</button>
   <button class="pe-2" style="width:48px"><svg class="shape" width="48" height="16"><path d="M-3 10L1 15.500H40L48 0" fill="none" stroke="#999"/></svg>布局2</button>
  </div>
 </section>
</main>
<footer class="cmd">命令行</footer>
</body>
</html>
